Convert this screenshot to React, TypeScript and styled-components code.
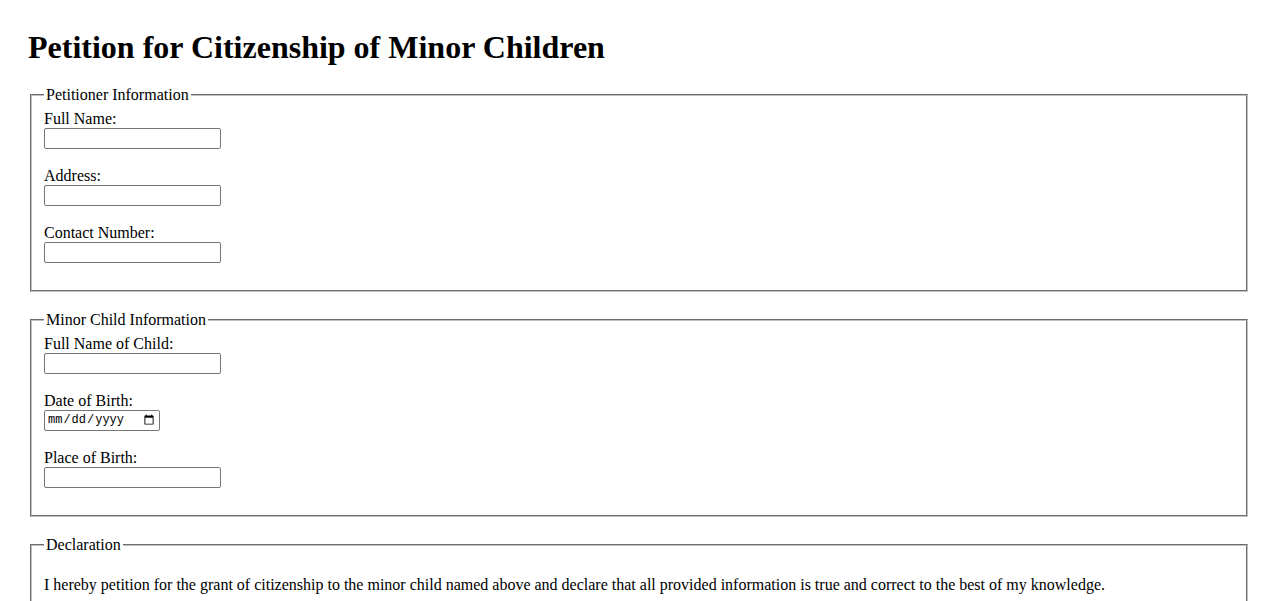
import React from "react";
import styled, { createGlobalStyle } from "styled-components";

const Global = createGlobalStyle`
  html, body { background: #fff; }
  body {
    margin: 8px;
    font-family: "Liberation Serif", "Times New Roman", serif;
    font-size: 16px;
    color: #000;
  }
`;

const Page = styled.div`
  padding: 0 20px;
`;

const Title = styled.h1`
  font-size: 32px;
  font-weight: bold;
  margin: 21.44px 0 19.5px;
`;

const Section = styled.fieldset`
  margin: 0 2px 19px;
  padding: 5.6px 12px 9.5px;
  border: 2px groove #c0c0c0;
  min-inline-size: min-content;
`;

const Legend = styled.legend`
  padding: 0 2px;
`;

const Label = styled.label`
  display: inline;
`;

const TextInput = styled.input`
  box-sizing: border-box;
  width: 177px;
  height: 21px;
  font-family: Arial, "Liberation Sans", sans-serif;
  font-size: 13.33px;
  padding: 1px 2px;
  border: 1px solid #767676;
  border-radius: 2px;
  margin: 0;
  vertical-align: bottom;
`;

const DateInput = styled(TextInput)`
  width: 116px;
  font-family: "Liberation Mono", "DejaVu Sans Mono", monospace;
  font-size: 12px;
  padding: 1px 2px;
`;

const Text = styled.p`
  margin: 16px 0;
`;

const Field: React.FC<{ id: string; label: string; type?: string }> = ({ id, label, type }) => (
  <>
    <Label htmlFor={id}>{label}</Label>
    <br />
    {type === "date" ? <DateInput id={id} type="date" /> : <TextInput id={id} type="text" />}
    <br />
    <br />
  </>
);

export default function App() {
  return (
    <Page>
      <Global />
      <Title>Petition for Citizenship of Minor Children</Title>
      <form>
        <Section>
          <Legend>Petitioner Information</Legend>
          <Field id="pname" label="Full Name:" />
          <Field id="paddr" label="Address:" />
          <Field id="pphone" label="Contact Number:" />
        </Section>
        <Section>
          <Legend>Minor Child Information</Legend>
          <Field id="cname" label="Full Name of Child:" />
          <Field id="cdob" label="Date of Birth:" type="date" />
          <Field id="cpob" label="Place of Birth:" />
        </Section>
        <Section>
          <Legend>Declaration</Legend>
          <Text>
            I hereby petition for the grant of citizenship to the minor child named above and declare that all provided
            information is true and correct to the best of my knowledge.
          </Text>
        </Section>
      </form>
    </Page>
  );
}
